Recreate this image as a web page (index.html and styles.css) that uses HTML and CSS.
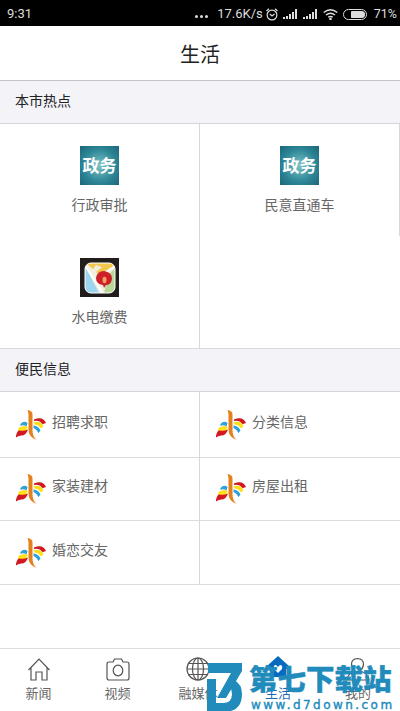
FILE: index.html
```html
<!DOCTYPE html>
<html lang="zh-CN">
<head>
<meta charset="utf-8">
<title>生活</title>
<link rel="stylesheet" href="styles.css">
</head>
<body>
<svg class="defs" width="0" height="0">
  <symbol id="logo" viewBox="0 0 30 31">
    <path fill="#2f9fd8" d="M4.500 14q3.500-4 7-1l-1 3.500q-3-2-6-.5z"/>
    <path fill="#ffdf1c" d="M2.500 18q4.500-3 9-1.500l-1.500 6.500q-4-3-8-1z"/>
    <path fill="#d01722" d="M0 26q1-5 3-5.500 5 1 9-1-2 6-6.500 6-3 0-5.500 2z"/>
    <path fill="#d01722" d="M18 9.500q9-3.500 12 3.500l-3.500 1.200q-3-4.200-8.500-3.200z"/>
    <path fill="#ffdf1c" d="M18 12q7-1.500 9.500 4l-2.500 2.500q-2.500-4-7-4z"/>
    <path fill="#2f9fd8" d="M17.500 15.500q5 .5 7 5l-2 2.500q-2-4-5-5z"/>
    <path fill="#e5801c" d="M11.500 0q5 .5 5 4.500v16q0 6 4 9.500-8-3-8-10.500V5q0-3-1-5z"/>
  </symbol>
  <symbol id="signal" viewBox="0 0 15 11">
    <path fill="#ddd" d="M0 8h2v2H0zM3 7h2v3H3zM6 5h2v5H6zM9 3h2v7H9zM12 0h2v10h-2z"/>
  </symbol>
</svg>
<div class="app">
  <header class="status">
    <span class="time">9:31</span>
    <span class="dots"><i></i><i></i><i></i></span>
    <span class="speed">17.6K/s</span>
    <svg class="alarm" viewBox="0 0 12 13" fill="none" stroke="#ddd" stroke-width="1.200"><circle cx="6" cy="7" r="4.900"/><path d="M.5 3 3 .8M11.500 3 9 .8M3.800 6 6 8l2.500-2"/></svg>
    <svg class="signal"><use href="#signal"/></svg>
    <svg class="signal"><use href="#signal"/></svg>
    <svg class="wifi" viewBox="0 0 15 11" fill="none" stroke="#ddd" stroke-width="1.400"><path d="M.7 3.500q6.800-5.500 13.600 0M3 6q4.500-3.500 9 0M5.200 8.300q2.300-1.600 4.600 0"/><circle cx="7.500" cy="10" r=".6"/></svg>
    <span class="battery"><i></i></span>
    <span class="percent">71%</span>
  </header>
  <h1>生活</h1>
  <h2>本市热点</h2>
  <section class="hot">
    <a class="tile"><span class="gov">政务</span><span>行政审批</span></a>
    <a class="tile"><span class="gov">政务</span><span>民意直通车</span></a>
    <a class="tile">
      <svg class="map" viewBox="0 0 39 39">
        <defs><clipPath id="round"><rect x="5" y="5" width="30" height="30" rx="6"/></clipPath></defs>
        <path fill="#211d1c" d="M0 0h39v39H0z"/>
        <g clip-path="url(#round)">
          <path fill="#f1eedf" d="M0 0h39v39H0z"/>
          <path fill="#9cd5ef" d="M5 8l14 27H5z"/>
          <path fill="#b9d795" d="M24 22l11-12v25H24z"/>
          <path fill="#f3c64c" d="M5 4h30v3L20 17l-4-3 6-5-6-2-3 4z"/>
          <path stroke="#fff" stroke-width="2" d="M6 9l17 26M17 20l18-12"/>
          <path stroke="#eee" stroke-width="2" d="M25 27l-2 8"/>
          <path fill="#ce2028" d="M16 20q1-7 8-7 8 1 8 8-1 6-6 6l-2 3-1-3q-7-1-7-7z"/>
          <ellipse cx="24.500" cy="22" rx="2" ry="3.300" fill="#f5a062"/>
        </g>
        <rect x="5" y="5" width="30" height="30" rx="6" fill="none" stroke="#fff"/>
      </svg>
      <span>水电缴费</span></a>
    <div class="tile blank"></div>
  </section>
  <h2>便民信息</h2>
  <section class="info">
    <a><svg><use href="#logo"/></svg>招聘求职</a>
    <a><svg><use href="#logo"/></svg>分类信息</a>
    <a class="middle"><svg><use href="#logo"/></svg>家装建材</a>
    <a class="middle"><svg><use href="#logo"/></svg>房屋出租</a>
    <a class="last"><svg><use href="#logo"/></svg>婚恋交友</a>
    <a></a>
  </section>
  <nav>
    <a><svg viewBox="0 0 24 24"><path d="M1.500 13 12 2l10.500 11M4 11v12h5v-8h6v8h5V11"/></svg>新闻</a>
    <a><svg viewBox="0 0 24 24"><path d="M3 5h4l1.500-3h7L17 5h4q2 0 2 2v14q0 2-2 2H3q-2 0-2-2V7q0-2 2-2z"/><ellipse cx="12" cy="13.500" rx="4.800" ry="5.300"/></svg>视频</a>
    <a><svg viewBox="0 0 24 24"><circle cx="12" cy="12" r="11"/><ellipse cx="12" cy="12" rx="5.500" ry="11"/><path d="M12 1v22M1 12h22M3 6.500h18M3 17.500h18"/></svg>融媒体</a>
    <a class="active"><svg viewBox="0 0 24 24"><path class="house" d="M12-1 23 9v3h-3v8H4v-8H1V9z"/><path class="heart" d="M12 16l-4-4q-1-4 2-4l2 2 2-2q3 0 2 4z"/></svg>生活</a>
    <a><svg viewBox="0 0 24 24"><path d="M9 14q-3.500-3-3.500-7 0-5 6-5.500 6 .5 6 5.500 0 4-3.500 7 8 2 9 9H1q1-7 8-9"/></svg>我的</a>
  </nav>
  <aside class="watermark">
    <svg class="mark" viewBox="0 0 38 50"><path fill="#218bbc" d="M2 1h34v8L20 36h-9L25 11H2z"/><path fill="#218bbc" d="M1 17h9v24h7q9 0 9-9 0-4-2-7l4-7q8 4 8 14 0 17-17 18H1z"/></svg>
    <div class="name">第七下载站</div>
    <div class="url">www.d7down.com</div>
  </aside>
</div>
</body>
</html>
```
FILE: styles.css
```css
* { box-sizing: border-box; }
body { margin: 0; background: #fff; color: #666; font: 14px/20px Roboto, "Noto Sans CJK SC", sans-serif; }
.defs { position: absolute; }
.app { position: relative; width: 400px; height: 711px; overflow: hidden; display: flex; flex-direction: column; }
.app svg { display: block; }
.status { height: 26px; padding: 2px 3px 0 7px; background: #000; color: #ddd; display: flex; align-items: center; font-size: 13px; flex: none; }
.dots { display: flex; gap: 2px; margin: 5px 9px 0 auto; }
.dots i { width: 3px; height: 3px; border-radius: 50%; background: #ddd; }
.speed { margin-right: 3px; }
.alarm { width: 12px; height: 13px; }
.signal { width: 15px; height: 11px; margin-left: 5px; }
.wifi { width: 15px; height: 11px; margin-left: 5px; }
.battery { width: 24px; height: 11px; margin: 0 7px 0 5px; padding: 1px 1px 1px 7px; border: 1px solid #ddd; border-radius: 6px; }
.battery i { display: block; height: 7px; background: #ddd; border-radius: 1px 4px 4px 1px; }
.percent { font-size: 12.500px; }
h1 { margin: 0; height: 55px; border-bottom: 1px solid #c3c3c8; color: #222; font-size: 20px; font-weight: 400; line-height: 58px; text-align: center; flex: none; }
h2 { margin: 0; height: 43px; padding-left: 15px; border-bottom: 1px solid #d5d5d8; background: #f3f3f8; color: #222; font-size: 14px; font-weight: 400; line-height: 40px; flex: none; }
.hot { display: grid; grid-template-columns: 200px 200px; grid-template-rows: 112px 112px; border-bottom: 1px solid #d8d8dc; }
.tile { display: flex; flex-direction: column; align-items: center; gap: 10px; padding-top: 22px; border-right: 1px solid #d8d8d8; }
.blank { border: 0; }
.gov, .map { width: 39px; height: 39px; }
.gov { background: radial-gradient(circle, #7cc3c5, #2c8596 60%, #1d6579); color: #fff; font-size: 17px; font-weight: 700; line-height: 40px; text-align: center; }
.info { display: grid; grid-template-columns: 200px 200px; grid-template-rows: 66px 63px 64px; }
.info a { display: flex; align-items: flex-start; gap: 6px; padding: 20px 0 0 16px; border-bottom: 1px solid #dcdcdc; }
.info a:nth-child(odd) { border-right: 1px solid #d8d8d8; }
.info .middle { padding-top: 18px; }
.info .last { padding-top: 19px; }
.info svg { width: 30px; height: 31px; margin-top: -2px; }
nav { height: 63px; margin-top: auto; border-top: 1px solid #ddd; display: grid; grid-template-columns: 77px 81px repeat(3, 80px); font-size: 13px; }
nav a { display: flex; flex-direction: column; align-items: center; gap: 4px; padding-top: 8px; line-height: 18px; }
nav svg { width: 24px; height: 24px; fill: none; stroke: #555; stroke-width: 1.200; overflow: visible; }
nav .active { color: #1769b5; }
nav .active svg { stroke: none; }
.house { fill: #086abf; }
.heart { fill: #fff; }
.watermark { position: absolute; left: 206px; top: 662px; width: 190px; height: 49px; color: #218bbc; }
.mark { position: absolute; left: 0; top: 0; width: 38px; height: 50px; }
.name { position: absolute; left: 43px; top: 2px; font-size: 28.500px; font-weight: 900; line-height: 34px; white-space: nowrap; -webkit-text-stroke: .4px #218bbc; }
.url { position: absolute; left: 45px; top: 35px; font: 400 12px/16px "DejaVu Sans", sans-serif; letter-spacing: 2.450px; white-space: nowrap; -webkit-text-stroke: .4px #218bbc; }
```
